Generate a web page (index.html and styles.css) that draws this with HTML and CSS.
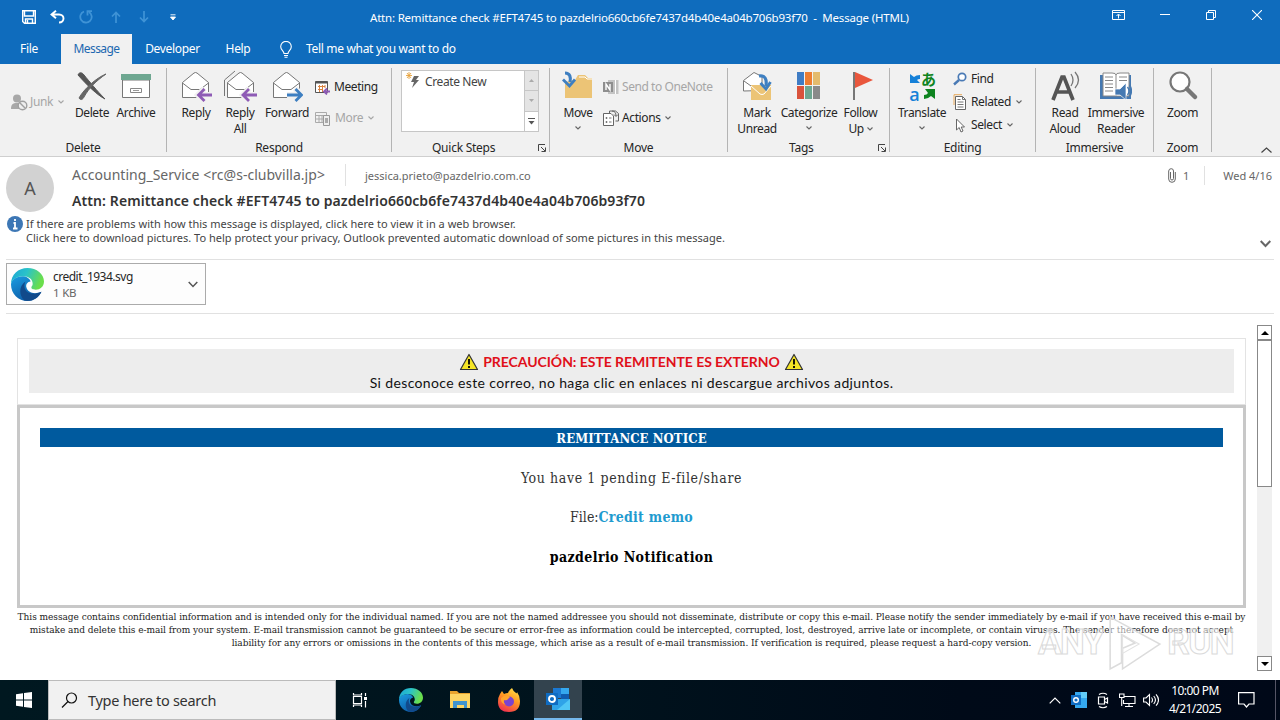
FILE: index.html
```html
<!DOCTYPE html>
<html lang="en">
<head>
<meta charset="utf-8">
<title>Message (HTML)</title>
<link rel="stylesheet" href="styles.css">
</head>
<body>
<svg width="0" height="0" class="defs">
  <defs>
    <linearGradient id="eg1" x1="0" y1="0" x2="1" y2="0.3"><stop offset="0" stop-color="#1aa5d8"/><stop offset=".5" stop-color="#2bc3c8"/><stop offset="1" stop-color="#6ade4b"/></linearGradient>
    <linearGradient id="eg2" x1="0" y1="0" x2="0.6" y2="1"><stop offset="0" stop-color="#1b9de2"/><stop offset="1" stop-color="#0c59a4"/></linearGradient>
    <linearGradient id="ff1" x1=".8" y1="0" x2=".3" y2="1"><stop offset="0" stop-color="#ffe14a"/><stop offset=".45" stop-color="#ff9a22"/><stop offset="1" stop-color="#f0304f"/></linearGradient>
    <symbol id="edge" viewBox="0 0 32 32">
      <path d="M29.500 23C27 28.500 22 32 16 32 7 32 0 25 0 16 0 12 5 8 11 8c4 0 7 2 8 5-3 0-5 3-4 6 1 5 8 7 14.500 4z" fill="url(#eg2)"/>
      <path d="M0 16C0 6 7 0 16 0c9 0 16 6 16 13 0 5-4 8-8 8-3 0-5-1-4-3 1-1 1-2 1-3 0-4-4-7-9-7C6 8 1 11 0 16z" fill="url(#eg1)"/>
      <path d="M13 31.500C7 26 8 17 14 13c-2 4-1 9 3 11 4 2 8 1 12.500-1-3 6-9 10-16.500 8.500z" fill="#114a8b"/>
    </symbol>
    <symbol id="chev" viewBox="0 0 6 4"><path d="M.5 .5L3 3 5.500 .5" fill="none" stroke="currentColor" stroke-width="1.1"/></symbol>
    <symbol id="env" viewBox="0 0 32 32"><path d="M2.500 12.500L14 3q1.500-1 3 0L28.500 12.500V27.500H2.500z" fill="#fff" stroke="#777"/><path d="M2.500 13L11 19.500h9L28.500 13" fill="none" stroke="#777"/></symbol>
    <symbol id="launch" viewBox="0 0 8 8"><path d="M.5 7V.5H7M3 3l4 4M7.500 3.500v4h-4" fill="none" stroke="#444"/></symbol>
    <symbol id="warn" viewBox="0 0 20 18"><path d="M10 1.500L18.500 16.500H1.500z" fill="#f5e526" stroke="#333" stroke-width="1.200" stroke-linejoin="round"/><path d="M10 6v5.500M10 13v2" stroke="#000" stroke-width="1.800"/></symbol>
  </defs>
</svg>

<header class="titlebar">
  <div class="quick">
    <svg width="14" height="14" viewBox="0 0 14 14"><path d="M.7.700h12.600v12.600H2.500L.7 11.500zM2.500 1v5h9V1M3.500 13V9h7v4M5.500 10v3" fill="none" stroke="#fff" stroke-width="1.400"/></svg>
    <svg width="15" height="14" viewBox="0 0 15 14"><path d="M6 .7L1.500 4.500 6 8.300M1.500 4.500H9c6 0 6 8 0 8" fill="none" stroke="#fff" stroke-width="1.900"/></svg>
    <svg class="dim" width="14" height="14" viewBox="0 0 14 14"><path d="M5 1.500A5.700 5.700 0 1 0 10 2M8.500 5.500V1.200H13" fill="none" stroke="currentColor" stroke-width="1.800"/></svg>
    <svg class="dim" width="10" height="12" viewBox="0 0 10 12"><path d="M5 12V1.500M1 5.500l4-4 4 4" fill="none" stroke="currentColor" stroke-width="1.700"/></svg>
    <svg class="dim" width="10" height="12" viewBox="0 0 10 12"><path d="M5 0v10.500M1 6.500l4 4 4-4" fill="none" stroke="currentColor" stroke-width="1.700"/></svg>
    <svg width="6" height="7" viewBox="0 0 6 7"><path d="M.5.800h5M.5 3h5L3 6z" fill="#fff" stroke="#fff" stroke-width=".9"/></svg>
  </div>
  <div class="title">Attn: Remittance check #EFT4745 to pazdelrio660cb6fe7437d4b40e4a04b706b93f70&nbsp; -&nbsp; Message (HTML)</div>
  <div class="winbtns">
    <svg width="13" height="10" viewBox="0 0 13 10"><path d="M.5.500h12v9H.5zM.5 2.500h12M6.500 8.500V4.500M4.500 6l2-2 2 2" fill="none" stroke="#fff"/></svg>
    <svg width="10" height="10" viewBox="0 0 10 10"><path d="M0 4.500h10" stroke="#fff"/></svg>
    <svg width="10" height="10" viewBox="0 0 10 10"><path d="M.5 2.500h7v7h-7zM2.500 2.500v-2h7v7h-2" fill="none" stroke="#fff"/></svg>
    <svg width="10" height="10" viewBox="0 0 10 10"><path d="M0 0l10 10M10 0L0 10" stroke="#fff" stroke-width="1.100"/></svg>
  </div>
</header>

<nav class="tabs">
  <span class="tab file">File</span><span class="tab active">Message</span><span class="tab dev">Developer</span><span class="tab help">Help</span>
  <svg width="12" height="17" viewBox="0 0 12 17"><path d="M4 12.500C4 10 .7 9 .7 5.700a5.300 5.300 0 0 1 10.600 0C11.300 9 8 10 8 12.500zM4 14.500h4M4.500 16.300h3" fill="none" stroke="#fff" stroke-width="1.100"/></svg>
  <span class="tell">Tell me what you want to do</span>
</nav>

<section class="ribbon">
  <div class="group g-delete">
    <div class="body">
      <div class="small lone off"><svg width="17" height="17" viewBox="0 0 17 17"><circle cx="6" cy="4.500" r="4" fill="#a8a8a8"/><path d="M0 15c0-6 3-6 8-6v6z" fill="#a8a8a8"/><circle cx="11.500" cy="11.500" r="4.300" fill="#eee" stroke="#a0a0a0" stroke-width="1.400"/><path d="M8.500 8.500l6 6" stroke="#a0a0a0" stroke-width="1.400"/></svg><span>Junk</span><svg class="cv" width="6" height="4"><use href="#chev"/></svg></div>
      <div class="big"><svg width="32" height="32" viewBox="0 0 32 32"><path d="M2 5c1-3 4-3 6 0 5 6 13 16 21 24-8-4-18-14-27-24z" fill="#555" stroke="#555"/><path d="M30 4C20 8 8 19 3 28c2 3 4 1 5-1C13 18 20 11 30 4z" fill="#666" stroke="#666"/></svg><span>Delete</span></div>
      <div class="big"><svg width="32" height="32" viewBox="0 0 32 32"><path d="M2.500 10h27v17.500h-27z" fill="#fff" stroke="#777"/><path d="M1 4h30v6H1z" fill="#6ea791"/><path d="M10.500 18.500h11v4h-11z" fill="#fff" stroke="#888"/><path d="M13 20.500h6" stroke="#999"/></svg><span>Archive</span></div>
    </div>
    <div class="cap">Delete</div>
  </div>
  <div class="group g-respond">
    <div class="body">
      <div class="big"><svg width="32" height="32" viewBox="0 0 32 32"><use href="#env" width="32" height="32"/><path d="M31.500 25H19M24.500 18.500L18 25l6.500 6.500" fill="none" stroke="#f1f1f1" stroke-width="6"/><path d="M32 25H18.500M24.500 19L18.500 25l6 6" fill="none" stroke="#8e5bb5" stroke-width="2.800"/></svg><span>Reply</span></div>
      <div class="big"><svg width="34" height="32" viewBox="0 0 34 32"><path d="M1.500 26V10L12 1" fill="none" stroke="#777"/><use href="#env" x="2" width="32" height="32"/><path d="M33 25H20M26.500 18.500L20 25l6.500 6.500" fill="none" stroke="#f1f1f1" stroke-width="6"/><path d="M34 25H20M26 19L20 25l6 6" fill="none" stroke="#8e5bb5" stroke-width="2.800"/></svg><span>Reply<br>All</span></div>
      <div class="big"><svg width="32" height="32" viewBox="0 0 32 32"><use href="#env" width="32" height="32"/><path d="M16 25H30M24 18.500L31 25l-7 6.500" fill="none" stroke="#f1f1f1" stroke-width="6"/><path d="M16 25H30M24.500 19L30.500 25l-6 6" fill="none" stroke="#3e7fc1" stroke-width="2.800"/></svg><span>Forward</span></div>
      <div class="stack two">
        <div class="small"><svg width="15" height="15" viewBox="0 0 15 15"><path d="M.5 1.500h12v11H.5z" fill="#fff" stroke="#555"/><path d="M.5 2.500h12" stroke="#555" stroke-width="2"/><path d="M3 6.500h7M3 9.500h5M4.500 5v7M7.500 5v7M10 5v3" stroke="#d98241"/><path d="M15 11.500H9.500M12 8.500l-3 3 3 3" fill="none" stroke="#8e5bb5" stroke-width="1.800"/></svg><span>Meeting</span></div>
        <div class="small off"><svg width="16" height="15" viewBox="0 0 16 15"><path d="M.5 1.500h11v10H.5zM.5 4.500h11M4 4v7M7 4v7M.5 8h8" fill="none" stroke="#aaa"/><path d="M8.500 4.500h6v10h-6z" fill="#eee" stroke="#999"/><path d="M10 7h3v5h-3z" fill="#aaa"/></svg><span>More</span><svg class="cv" width="6" height="4"><use href="#chev"/></svg></div>
      </div>
    </div>
    <div class="cap">Respond</div>
  </div>
  <div class="group g-quick">
    <div class="body">
      <div class="gallery">
        <div class="list"><svg width="15" height="17" viewBox="0 0 15 17"><path d="M8 4h5l-3 4h3l-7 8 2-6H5z" fill="#666"/><path d="M3 0v7M0 3.500h6M1 1l4 5M5 1L1 6" stroke="#e8a33d" stroke-width=".9"/></svg><span>Create New</span></div>
        <div class="arrows">
          <i><svg width="5" height="3" viewBox="0 0 5 3"><path d="M0 3L2.500 0 5 3z" fill="#aaa"/></svg></i>
          <i><svg width="5" height="3" viewBox="0 0 5 3"><path d="M0 0h5L2.500 3z" fill="#aaa"/></svg></i>
          <i class="on"><svg width="7" height="7" viewBox="0 0 7 7"><path d="M0 .5h7" stroke="#555"/><path d="M.5 3h6L3.500 6.500z" fill="#555"/></svg></i>
        </div>
      </div>
    </div>
    <div class="cap">Quick Steps<svg class="la" width="8" height="8"><use href="#launch"/></svg></div>
  </div>
  <div class="group g-move">
    <div class="body">
      <div class="big"><svg width="32" height="32" viewBox="0 0 32 32"><path d="M3 12V28h27V8h-4l-3-3h-7l-3 5z" fill="#ecc476"/><path d="M17 7h6l2 2h5" fill="none" stroke="#fff"/><path d="M3 3c5 0 6 4 5 9" fill="none" stroke="#3e7fc1" stroke-width="3.200"/><path d="M1 9.500L7.500 16 13 9.500" fill="none" stroke="#3e7fc1" stroke-width="2.800"/></svg><span>Move</span><svg class="cv" width="6" height="4"><use href="#chev"/></svg></div>
      <div class="stack two">
        <div class="small off"><svg width="16" height="16" viewBox="0 0 16 16"><path d="M5 1h10.500v14H5z" fill="#c4c4c4"/><path d="M12.500 1v14" stroke="#fff"/><path d="M0 3h10v10H0z" fill="#8e8e8e"/><path d="M3 11V5l4 6V5" fill="none" stroke="#fff" stroke-width="1.400"/></svg><span class="onenote">Send to OneNote</span></div>
        <div class="small"><svg width="16" height="16" viewBox="0 0 16 16"><path d="M.5 3.500H8l2.500 2.500v9.500H.5z" fill="#fff" stroke="#666"/><path d="M2.500 8h2M6 8h2.500M2.500 12h2M6 12h2.500M3.500 7v2M3.500 11v2" stroke="#777"/><path d="M6.500 3V1h6l3 2.500V11h-3M9 1c3 0 4 2 4 5M11 4.500l2 2 2-2" fill="none" stroke="#666"/></svg><span>Actions</span><svg class="cv" width="6" height="4"><use href="#chev"/></svg></div>
      </div>
    </div>
    <div class="cap">Move</div>
  </div>
  <div class="group g-tags">
    <div class="body">
      <div class="big"><svg width="32" height="32" viewBox="0 0 32 32"><path d="M2.500 21V10.500L13 2.500l8 4v14z" fill="#fff" stroke="#777"/><path d="M3 11l7 5" stroke="#777"/><path d="M10 15h20v15H10z" fill="#ecc476"/><path d="M10 16l9 8q2 1 4 0l7-8" fill="none" stroke="#fff"/><path d="M18 6c6-1 8 3 7 10" fill="none" stroke="#3e7fc1" stroke-width="3.200"/><path d="M19.500 13l5.500 6 4.500-7" fill="none" stroke="#3e7fc1" stroke-width="2.800"/></svg><span>Mark<br>Unread</span></div>
      <div class="big"><svg width="32" height="32" viewBox="0 0 32 32"><path d="M4 2h7v13H4z" fill="#3f7cc4"/><path d="M12 2h7v13h-7z" fill="#ed7d31"/><path d="M20 2h7v13h-7z" fill="#e4bb6d"/><path d="M4 16h7v13H4z" fill="#d9533c"/><path d="M12 16h7v13h-7z" fill="#6ea791"/><path d="M20 16h7v13h-7z" fill="#8a8a8a"/></svg><span>Categorize</span><svg class="cv" width="6" height="4"><use href="#chev"/></svg></div>
      <div class="big"><svg width="32" height="32" viewBox="0 0 32 32"><path d="M9 2v28" stroke="#777" stroke-width="2"/><path d="M10 2l18 8-18 8z" fill="#e9573d"/></svg><span>Follow<br>Up <svg class="cv" width="6" height="4"><use href="#chev"/></svg></span></div>
    </div>
    <div class="cap">Tags<svg class="la" width="8" height="8"><use href="#launch"/></svg></div>
  </div>
  <div class="group g-edit">
    <div class="body">
      <div class="big">
        <div class="tr-icon">
          <svg width="12" height="11" viewBox="0 0 12 11"><path d="M1 1l4 3q2-2 6-2v4q-2 0-3 1l3 3H1z" fill="#1580d8"/></svg><b class="t-jp">あ</b>
          <b class="t-lat">a</b><svg width="12" height="12" viewBox="0 0 12 12"><path d="M2 1h10v10L8 8q-3 3-7 3V7q3 0 4-2z" fill="#0e8420"/></svg>
        </div><span>Translate</span><svg class="cv" width="6" height="4"><use href="#chev"/></svg></div>
      <div class="stack three">
        <div class="small"><svg width="14" height="14" viewBox="0 0 14 14"><circle cx="9" cy="5" r="3.700" fill="#fff" stroke="#4a7ab5" stroke-width="1.700"/><path d="M6 8l-5 4.500" stroke="#4a7ab5" stroke-width="2.400"/></svg><span>Find</span></div>
        <div class="small"><svg width="14" height="16" viewBox="0 0 14 16"><path d="M1 11V.7h8" fill="none" stroke="#e8a95a"/><path d="M2.500 2.500h7l3 3v10h-10z" fill="#fff" stroke="#666"/><path d="M9.500 2.500v3h3M4.500 8h6M4.500 10.500h6M4.500 13h6M4.500 5.500h3" fill="none" stroke="#777"/></svg><span>Related</span><svg class="cv" width="6" height="4"><use href="#chev"/></svg></div>
        <div class="small"><svg width="14" height="15" viewBox="0 0 14 15"><path d="M3.500 1v11l2.700-2.500L8 14l2-1-1.800-4H11.500z" fill="#fff" stroke="#666"/></svg><span>Select</span><svg class="cv" width="6" height="4"><use href="#chev"/></svg></div>
      </div>
    </div>
    <div class="cap">Editing</div>
  </div>
  <div class="group g-imm">
    <div class="body">
      <div class="big"><svg width="32" height="32" viewBox="0 0 32 32"><path d="M4 30L13 7h2l9 23M8 22h12" fill="none" stroke="#555" stroke-width="3.700"/><path d="M22 4q4 6 0 12M26 2q7 8 0 16" fill="none" stroke="#777" stroke-width="1.300"/></svg><span>Read<br>Aloud</span></div>
      <div class="big"><svg width="32" height="32" viewBox="0 0 32 32"><path d="M0 5h31v24H0z" fill="#4579b2"/><path d="M3 3h9q4 0 4 2 0-2 4-2h9v23H3z" fill="#fff" stroke="#888"/><path d="M16 5v21M5 7h8M5 10.500h8M5 14h8M5 17.500h8M5 21h8M19 7h8M19 10.500h8" fill="none" stroke="#888"/><path d="M15 19h5l6-6v17l-6-5h-5z" fill="#4579b2" stroke="#fff" stroke-width=".7"/><path d="M27.500 17q3 4 0 8M29.500 15q4 6 0 12" fill="none" stroke="#4579b2" stroke-width="1.400"/></svg><span>Immersive<br>Reader</span></div>
    </div>
    <div class="cap">Immersive</div>
  </div>
  <div class="group g-zoom">
    <div class="body"><div class="big"><svg width="32" height="32" viewBox="0 0 32 32"><circle cx="13" cy="12" r="9.500" fill="#fff" stroke="#777" stroke-width="2.200"/><path d="M20 19l8 8" stroke="#777" stroke-width="4.500" stroke-linecap="round"/></svg><span>Zoom</span></div></div>
    <div class="cap">Zoom</div>
  </div>
  <svg class="collapse" width="11" height="6" viewBox="0 0 11 6"><path d="M.5 5.500l5-4.500 5 4.500" fill="none" stroke="#444" stroke-width="1.200"/></svg>
</section>

<section class="mailhead">
  <div class="who">
    <div class="avatar">A</div>
    <div class="lines">
      <div class="row"><span class="from">Accounting_Service &lt;rc@s-clubvilla.jp&gt;</span><span class="to">jessica.prieto@pazdelrio.com.co</span>
        <svg class="clip" width="8" height="15" viewBox="0 0 8 15"><path d="M2.500 4v6.500q0 1.500 1.500 1.500t1.500-1.500V3Q5.500.700 3.200.700T.7 3v8q0 3.300 3.300 3.300T7.300 11V4" fill="none" stroke="#666"/></svg><span class="count">1</span><span class="date">Wed 4/16</span></div>
      <div class="subject">Attn: Remittance check #EFT4745 to pazdelrio660cb6fe7437d4b40e4a04b706b93f70</div>
    </div>
  </div>
  <div class="info">
    <svg width="16" height="16" viewBox="0 0 16 16"><circle cx="8" cy="8" r="8" fill="#3d77b5"/><path d="M8 3v2M6.500 7H8v5M6 12.500h4.500" fill="none" stroke="#fff" stroke-width="1.800"/></svg>
    <div><div class="i1">If there are problems with how this message is displayed, click here to view it in a web browser.</div><div class="i2">Click here to download pictures. To help protect your privacy, Outlook prevented automatic download of some pictures in this message.</div></div>
    <svg class="expand" width="11" height="8" viewBox="0 0 11 8"><path d="M.7 1l4.800 5 4.800-5" fill="none" stroke="#666" stroke-width="2"/></svg>
  </div>
</section>
<section class="attachments">
  <div class="file-card"><svg width="33" height="33"><use href="#edge" width="33" height="33"/></svg><div class="fmeta"><div class="fname">credit_1934.svg</div><div class="fsize">1 KB</div></div><svg width="10" height="7" viewBox="0 0 10 7"><path d="M.7 1L5 5.500 9.300 1" fill="none" stroke="#555" stroke-width="1.500"/></svg></div>
</section>

<main class="reader">
  <div class="mail">
    <div class="caution"><div class="caution-in">
      <div class="c1"><svg width="20" height="18"><use href="#warn"/></svg><span>PRECAUCIÓN: ESTE REMITENTE ES EXTERNO</span><svg width="20" height="18"><use href="#warn"/></svg></div>
      <div class="c2">Si desconoce este correo, no haga clic en enlaces ni descargue archivos adjuntos.</div>
    </div></div>
    <div class="notice">
      <div class="bar"><span>REMITTANCE NOTICE</span></div>
      <p class="p1">You have 1 pending E-file/share</p>
      <p class="p2">File:<b>Credit memo</b></p>
      <p class="p3"><b>pazdelrio Notification</b></p>
    </div>
    <div class="legal">
      <div class="l1">This message contains confidential information and is intended only for the individual named. If you are not the named addressee you should not disseminate, distribute or copy this e-mail. Please notify the sender immediately by e-mail if you have received this e-mail by</div>
      <div class="l2">mistake and delete this e-mail from your system. E-mail transmission cannot be guaranteed to be secure or error-free as information could be intercepted, corrupted, lost, destroyed, arrive late or incomplete, or contain viruses. The sender therefore does not accept</div>
      <div class="l3">liability for any errors or omissions in the contents of this message, which arise as a result of e-mail transmission. If verification is required, please request a hard-copy version.</div>
    </div>
  </div>
  <div class="scroll">
    <i class="sb"><svg width="8" height="4" viewBox="0 0 8 4"><path d="M0 4l4-4 4 4z"/></svg></i>
    <i class="thumb"></i>
    <i class="sb end"><svg width="8" height="4" viewBox="0 0 8 4"><path d="M0 0h8L4 4z"/></svg></i>
  </div>
</main>
<div class="watermark"><span>ANY</span><svg width="56" height="58" viewBox="0 0 54 56"><path d="M3 3l48 26L15 53V33l12-5L14 20v27L3 53z" fill="#fff" fill-opacity=".55" stroke="#dcdcdc" stroke-width="1.500"/><path d="M15 20l16 9-16 9z" fill="none" stroke="#e2e2e2"/></svg><span>RUN</span></div>

<footer class="taskbar">
  <div class="start"><svg width="16" height="16" viewBox="0 0 16 16"><path d="M0 2.200L7 1.200V7.500H0zM8 1l8-1v7.500H8zM0 8.500h7v6.300l-7-1zM8 8.500h8V16l-8-1.100z" fill="#fff"/></svg></div>
  <div class="search"><svg width="17" height="17" viewBox="0 0 17 17"><circle cx="10.500" cy="6" r="5" fill="none" stroke="#111" stroke-width="1.200"/><path d="M7 9.500L1 15.500" stroke="#111" stroke-width="1.300"/></svg><span>Type here to search</span></div>
  <div class="app view"><svg width="18" height="18" viewBox="0 0 18 18"><path d="M2.500 5.500h8v7h-8zM2.500 2v2h8V2M2.500 16v-2h8v2M14.500 2v3M14.500 10v6.500" fill="none" stroke="#fff" stroke-width="1.200"/><path d="M13 6h3v3h-3z" fill="#fff"/></svg></div>
  <div class="app"><svg width="24" height="24"><use href="#edge" width="24" height="24"/></svg></div>
  <div class="app"><svg width="22" height="20" viewBox="0 0 22 20"><path d="M1 1h7l2 2h11v6H1z" fill="#e8a32e"/><path d="M1 4h20v14H1z" fill="#fcd464"/><path d="M4 18v-7h14v7h-3v-3H8v3z" fill="#3f93cf"/></svg></div>
  <div class="app"><svg width="24" height="25" viewBox="0 0 24 25"><path d="M3 6l2-3 2 3q2-1 4-1 1-3 4-5 1 3 4 5 1 1 1-1 3 4 3 9 0 11-11 11T1 14q0-5 2-8z" fill="url(#ff1)"/><circle cx="12" cy="13.500" r="5" fill="#7a43d0"/><path d="M7 8q4-1 6 1l-2 2q-1 2-4 1-1 3 2 5-6-2-5-7z" fill="#ffa52c"/></svg></div>
  <div class="app on"><svg width="26" height="24" viewBox="0 0 26 24"><path d="M8 1h16v10H8z" fill="#1a78d2"/><path d="M16 1h8v6h-8z" fill="#35a8ee"/><path d="M16 7h8v6h-8z" fill="#0f5cb0"/><path d="M7 12h18v11H7z" fill="#2fa3e8"/><path d="M25 12v11H12z" fill="#50c6f5"/><path d="M1 6h12v12H1z" fill="#0f6cc2"/><circle cx="7" cy="12" r="3" fill="none" stroke="#fff" stroke-width="1.900"/></svg></div>
  <div class="tray">
    <svg width="12" height="7" viewBox="0 0 12 7"><path d="M.7 6.300L6 1l5.300 5.300" fill="none" stroke="#fff" stroke-width="1.200"/></svg>
    <svg class="t-ol" width="16" height="16" viewBox="0 0 16 16"><path d="M4 0h12v16H4z" fill="#35a8ee"/><path d="M10 0h6v6h-6z" fill="#62ccf7"/><path d="M0 3h10v10H0z" fill="#0f6cc2"/><circle cx="5" cy="8" r="2.300" fill="none" stroke="#fff" stroke-width="1.400"/></svg>
    <svg class="t-cam" width="12" height="17" viewBox="0 0 12 17"><path d="M1.500 5h6v7h-6zM7.500 7.500L10.500 6v5l-3-1.500M2 2.500q4-2.500 8 0M2 14.500q4 2.500 8 0" fill="none" stroke="#fff" stroke-width="1.200"/></svg>
    <svg class="t-net" width="17" height="15" viewBox="0 0 17 15"><path d="M5 3.500h11v7H4.500V7M10 10.500v3M6 13.500h8M.5 1h4.500v3.500H.5zM2.700 4.500V13" fill="none" stroke="#fff" stroke-width="1.100"/></svg>
    <svg class="t-vol" width="16" height="14" viewBox="0 0 16 14"><path d="M.6 5H3l3.500-3.500v11L3 9H.6zM8.500 4.500q2 2.500 0 5M10.700 3q3.500 4 0 8M13 1.300q5 5.700 0 11.400" fill="none" stroke="#fff" stroke-width="1.100"/></svg>
    <div class="clock"><div class="time">10:00 PM</div><div class="day">4/21/2025</div></div>
    <svg class="t-act" width="17" height="16" viewBox="0 0 17 16"><path d="M.6.600h15.400v11.400h-5L8.500 15 6 12H.6z" fill="none" stroke="#fff" stroke-width="1.200"/></svg>
    <i class="peek"></i>
  </div>
</footer>
</body>
</html>
```
FILE: styles.css
```css
* { box-sizing: border-box; }
body { margin: 0; width: 1280px; height: 720px; overflow: hidden; display: flex; flex-direction: column; background: #fff; font: 12px/16px "Noto Sans", "Open Sans", sans-serif; color: #262626; position: relative; }
svg { display: block; flex: none; }
span, .title, .subject, .i1, .i2, .legal div, .c2 { white-space: nowrap; }
i { display: block; }
.defs { position: absolute; }

.titlebar { height: 34px; background: #0f6cbd; color: #fff; display: flex; flex: none; }
.quick { display: flex; align-items: center; width: 370px; padding-left: 22px; }
.quick svg + svg { margin-left: 14px; }
.quick .dim { color: #3f93d6; }
.quick .dim + .dim { margin-left: 18px; }
.quick svg:last-child { margin-left: 21px; }
.title { width: 540px; padding-top: 10px; font-size: 11.500px; letter-spacing: -.2px; }
.winbtns { margin-left: auto; display: flex; gap: 36px; padding: 10px 18px 0 0; }
.winbtns svg:first-child { margin-right: -1px; }

.tabs { height: 30px; flex: none; background: #0f6cbd; color: #fff; display: flex; align-items: center; letter-spacing: -.32px; }
.tab { line-height: 30px; height: 30px; text-align: center; }
.tab.file { width: 61px; padding-right: 3px; }
.tab.active { width: 71px; background: #f1f1f1; color: #1c68b0; letter-spacing: -.55px; }
.tab.dev { width: 81px; }
.tab.help { width: 50px; }
.tabs svg { margin: 0 14px 0 17px; }

.ribbon { height: 93px; flex: none; background: #f1f1f1; border-bottom: 1px solid #cfcfcf; display: flex; padding-top: 4px; letter-spacing: -.38px; }
.group { height: 84px; border-right: 1px solid #b4b4b4; display: flex; flex-direction: column; }
.body { display: flex; height: 72px; flex: none; padding-top: 2px; }
.cap { height: 16px; flex: none; text-align: center; display: flex; justify-content: center; align-items: center; letter-spacing: -.25px; }
.cap .la { margin-left: auto; }
.big { display: flex; flex-direction: column; align-items: center; text-align: center; }
.big > span { margin-top: 3px; }
.big > .cv { margin-top: 5px; }
.cv { color: #666; }
.big span .cv { display: inline-block; vertical-align: 2px; }
.small { display: flex; align-items: center; gap: 4px; height: 16px; }
.small .cv { margin-left: 1px; }
.off, .off .cv { color: #a6a6a6; }
.stack { display: flex; flex-direction: column; }
.stack.two { gap: 15px; padding-top: 9px; }
.stack.two .small:first-child span { letter-spacing: -.43px; }
.stack.three { gap: 7px; padding-top: 1px; }

.g-delete { width: 167px; }
.g-delete .lone { width: 70px; padding-left: 11px; margin-top: 24px; gap: 2px; }
.g-delete .lone .cv { margin-left: 3px; }
.g-delete .big { width: 44px; }
.g-respond { width: 225px; }
.g-respond .body { padding-left: 7px; }
.g-respond .big { width: 44px; }
.g-respond .big:nth-child(3) { width: 50px; margin-right: 3px; }
.g-quick { width: 158px; }
.g-quick .body { padding-left: 9px; }
.g-quick .cap { padding: 0 3px 0 40px; }
.gallery { display: flex; width: 138px; height: 62px; border: 1px solid #c6c6c6; background: #fff; }
.gallery .list { display: flex; flex: 1; gap: 4px; padding: 1px 0 0 4px; color: #444; }
.gallery .list span { padding-top: 2px; }
.arrows { width: 14px; border-left: 1px solid #c6c6c6; display: flex; flex-direction: column; }
.arrows i { flex: 1; display: flex; align-items: center; justify-content: center; background: #e4e4e4; border-bottom: 1px solid #c6c6c6; }
.arrows .on { background: #fff; border: 0; }
.g-move { width: 178px; }
.g-move .body { padding-left: 6px; }
.g-move .big { width: 44px; margin-right: 3px; }
.g-move .small { gap: 3px; }
.g-tags { width: 162px; }
.g-tags .body { padding-left: 4px; }
.g-tags .big:nth-child(1) { width: 50px; }
.g-tags .big:nth-child(2) { width: 54px; }
.g-tags .big:nth-child(3) { width: 49px; }
.g-tags .cap { padding: 0 3px 0 61px; }
.g-edit { width: 146px; }
.g-edit .big { width: 56px; margin: 0 3px 0 4px; }
.tr-icon { width: 28px; height: 32px; display: grid; grid-template-columns: 13px 15px; grid-template-rows: 17px 13px; align-items: center; justify-items: center; letter-spacing: 0; }
.t-lat { font: 600 18px/10px "Open Sans", sans-serif; color: #1580d8; }
.t-jp { font: bold 15px/17px "Noto Sans CJK JP", sans-serif; color: #0e8420; }
.g-imm { width: 118px; }
.g-imm .big:nth-child(1) { width: 44px; margin-left: 7px; }
.g-imm .big:nth-child(2) { width: 58px; }
.g-zoom { width: 58px; }
.g-zoom .big { width: 57px; }
.collapse { margin: 79px 0 0 49px; }

.mailhead { height: 103px; flex: none; margin: 0 6px; border-bottom: 1px solid #e1e1e1; }
.who { display: flex; height: 57px; padding-top: 7px; }
.avatar { width: 48px; height: 48px; border-radius: 50%; background: #d2d2d2; font-size: 18px; line-height: 49px; text-align: center; color: #555; }
.lines { flex: 1; padding-left: 18px; }
.row { display: flex; align-items: center; height: 22px; color: #666; font-size: 11px; }
.from { width: 274px; font-size: 14px; line-height: 22px; border-right: 1px solid #e1e1e1; letter-spacing: .03px; }
.to { margin-left: 19px; padding-top: 2px; }
.clip { margin-left: auto; }
.count { margin: 1px 15px 0 7px; }
.date { border-left: 1px solid #e1e1e1; padding: 2px 2px 1px 18px; }
.subject { font-weight: 600; font-size: 14px; line-height: 20px; color: #333; margin-top: 5px; letter-spacing: .1px; }
.info { display: flex; font-size: 11px; line-height: 14px; color: #444; letter-spacing: .01px; }
.info > svg { margin: 2px 0 0 1px; }
.info > div { margin: 3px 0 0 3px; }
.info .expand { margin: 26px 3px 0 auto; align-self: flex-start; }
.attachments { height: 54px; flex: none; margin: 0 6px; border-bottom: 1px solid #e1e1e1; padding-top: 3px; }
.file-card { display: flex; align-items: center; width: 200px; height: 42px; border: 1px solid #ababab; background: #fdfdfd; padding: 0 7px 0 4px; }
.fmeta { margin-left: 9px; flex: 1; padding-top: 1px; letter-spacing: -.5px; }
.fsize { color: #666; font-size: 11.500px; letter-spacing: -.2px; }

.reader { height: 366px; flex: none; display: flex; padding: 11px 8px 0 17px; }
.mail { width: 1229px; padding-top: 13px; }
.caution { height: 67px; border: 1px solid #e3e3e3; padding: 10px 11px; }
.caution-in { background: #ededed; height: 44px; font-family: Lato, sans-serif; text-align: center; color: #111; }
.c1 { display: flex; justify-content: center; align-items: center; gap: 4px; height: 26px; font-weight: 700; color: #e0101a; font-size: 14px; letter-spacing: -.05px; }
.c2 { font-size: 14px; line-height: 16px; letter-spacing: .37px; }
.notice { height: 203px; border: 3px solid #c8c8c8; padding: 20px; font: 14px/19px "DejaVu Serif Condensed", "DejaVu Serif", serif; font-stretch: condensed; text-align: center; color: #333; }
.bar { background: #005a9e; color: #fff; font-weight: 700; height: 19px; line-height: 21px; font-size: 13px; letter-spacing: .1px; }
.notice p { margin: 21px 0 0; }
.notice .p1 { letter-spacing: .6px; margin: 22px 0 0; }
.notice .p2 { margin-top: 20px; }
.notice .p2 b { color: #1f9bcf; letter-spacing: .25px; }
.notice .p3 { color: #000; letter-spacing: .4px; }
.legal { font: 10px/13px "DejaVu Serif Condensed", "DejaVu Serif", serif; font-stretch: condensed; letter-spacing: -.035px; text-align: center; color: #222; margin-top: 2px; }
.legal div { display: flex; justify-content: center; }
.scroll { width: 15px; height: 346px; margin-left: auto; background: #f0f0f0; display: flex; flex-direction: column; }
.sb { height: 15px; border: 1px solid #888; background: #fff; display: flex; align-items: center; justify-content: center; }
.thumb { height: 147px; border: 1px solid #888; background: #fff; }
.end { margin-top: auto; }
.watermark { position: absolute; left: 1038px; top: 614px; display: flex; align-items: center; justify-content: space-between; width: 195px; font: 700 35px/58px Roboto, sans-serif; letter-spacing: -1.500px; color: rgba(255,255,255,.5); -webkit-text-stroke: 1px #dadada; }

.taskbar { height: 40px; flex: none; background: linear-gradient(90deg, #001820 0, #00131d 45%, #000a18 75%, #000818); display: flex; color: #fff; }
.start { width: 48px; display: flex; align-items: center; justify-content: center; }
.search { width: 288px; background: #f1f1f1; border: 1px solid #bbb; display: flex; align-items: center; gap: 10px; padding-left: 12px; color: #333; font-size: 14.500px; letter-spacing: -.28px; }
.app { width: 48px; margin-left: 1px; display: flex; align-items: center; justify-content: center; }
.view { margin: 0 2px 0 0; }
.app.on { background: #33434e; border-bottom: 2px solid #76b9ed; }
.tray { margin-left: auto; display: flex; align-items: center; }
.t-ol { margin-left: 10px; }
.t-cam { margin-left: 10px; }
.t-net { margin-left: 10px; }
.t-vol { margin-left: 7px; }
.clock { width: 60px; margin-left: 6px; text-align: center; line-height: 18px; letter-spacing: -.55px; }
.t-act { margin-left: 13px; }
.peek { width: 1px; height: 40px; background: #556; margin: 0 4px 0 20px; }
```
